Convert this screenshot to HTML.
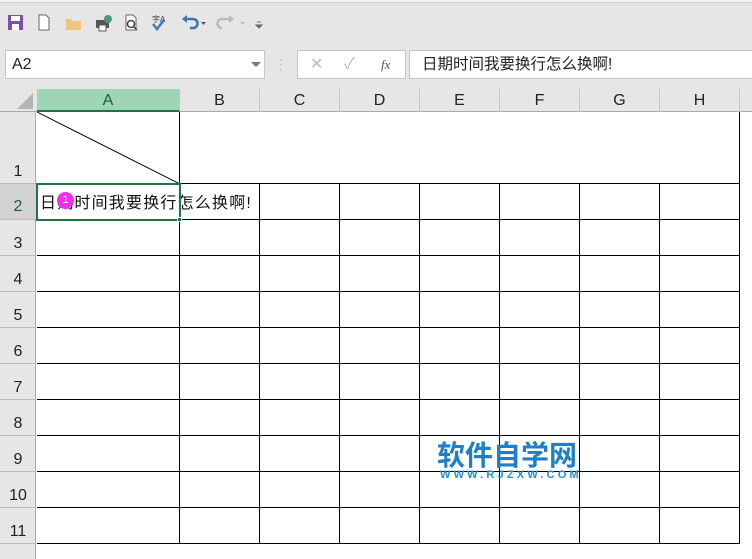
<!DOCTYPE html><html><head><meta charset="utf-8"><style>
*{margin:0;padding:0;box-sizing:border-box}
body{width:752px;height:559px;background:#e6e6e6;position:relative;overflow:hidden;font-family:"Liberation Sans","Noto Sans CJK SC",sans-serif}
.a{position:absolute}
.hl{position:absolute;height:1px;background:#000}
.vl{position:absolute;width:1px;background:#000}
.ch{position:absolute;top:89px;height:23px;font-size:16px;color:#222;text-align:center;line-height:23px;border-right:1px solid #c6c6c6}
.rh{position:absolute;left:0;width:36px;font-size:16px;color:#222;text-align:center}
</style></head><body>
<div class="a" style="left:0;top:0;width:752px;height:3px;background:#f5f5f5;border-bottom:1px solid #d0d0d0"></div>
<svg class="a" style="left:0;top:8px" width="280" height="28">
<rect x="8" y="7" width="15" height="15" fill="#7f4fa8"/><rect x="11" y="8" width="9" height="5" fill="#fff"/><rect x="12" y="16" width="7" height="6" fill="#fff"/>
<path d="M39 7h7l3 3v12h-10z" fill="#fff" stroke="#666"/>
<path d="M66 11h5l1 2h9v9h-15z" fill="#edc580"/>
<rect x="96" y="12" width="13" height="8" fill="#555"/><rect x="99" y="17" width="7" height="6" fill="#fff" stroke="#555"/><circle cx="108" cy="11" r="4" fill="#4c9a7a"/>
<path d="M126 7h7l3 3v12h-10z" fill="#fff" stroke="#666"/><circle cx="131" cy="16" r="3.5" fill="none" stroke="#444" stroke-width="1.5"/><path d="M133 18l4 4" stroke="#444" stroke-width="1.5"/>
<text x="152" y="14" font-size="8" fill="#444">字A</text><path d="M153 16l4 5 7-9" stroke="#3b7dc4" stroke-width="2.5" fill="none"/>
<path d="M185 11h8a4 4 0 010 9h-3" stroke="#3b75b8" stroke-width="2.5" fill="none"/><path d="M182 11l5-4v8z" fill="#3b75b8"/><path d="M201 14h5l-2.5 3z" fill="#555"/>
<path d="M230 11h-8a4 4 0 000 9" stroke="#bbb" stroke-width="2.5" fill="none"/><path d="M234 11l-5-4v8z" fill="#bbb"/><path d="M240 14h5l-2.5 3z" fill="#bbb"/>
<path d="M257 14h4M256 17h6l-3 3z" stroke="#666" fill="#666"/>
</svg>
<div class="a" style="left:5px;top:50px;width:260px;height:29px;background:#fff;border:1px solid #c6c6c6;font-size:16px;line-height:27px;padding-left:6px;color:#222">A2</div>
<div class="a" style="left:251px;top:62px;width:0;height:0;border-left:5px solid transparent;border-right:5px solid transparent;border-top:5px solid #777"></div>
<div class="a" style="left:279px;top:57px;color:#aaa;font-size:12px;line-height:5px">·<br>·<br>·</div>
<div class="a" style="left:297px;top:50px;width:109px;height:29px;background:#fff;border:1px solid #c6c6c6;font-size:16px;line-height:27px;color:#bbb"><span class="a" style="left:12px">✕</span><span class="a" style="left:46px">✓</span><span class="a" style="left:83px;font-family:'Liberation Serif';font-style:italic;color:#555;font-size:13px">fx</span></div>
<div class="a" style="left:409px;top:50px;width:345px;height:29px;background:#fff;border:1px solid #c6c6c6;font-size:15.5px;line-height:27px;padding-left:12px;color:#222">日期时间我要换行怎么换啊!</div>
<div class="a" style="left:0;top:112px;width:752px;height:447px;background:#fff"></div>
<div class="a" style="left:0;top:112px;width:36px;height:447px;background:#e6e6e6;border-right:1px solid #aaa"></div>
<div class="a" style="left:0;top:111px;width:752px;height:1px;background:#aaa"></div>
<div class="a" style="left:17px;top:93px;width:0;height:0;border-left:16px solid transparent;border-bottom:16px solid #b4b4b4"></div>
<div class="ch" style="left:37px;width:143px;background:#9fd5b7;color:#1f5a3a;border-bottom:2px solid #217346">A</div>
<div class="ch" style="left:180px;width:80px">B</div><div class="ch" style="left:260px;width:80px">C</div><div class="ch" style="left:340px;width:80px">D</div><div class="ch" style="left:420px;width:80px">E</div><div class="ch" style="left:500px;width:80px">F</div><div class="ch" style="left:580px;width:80px">G</div><div class="ch" style="left:660px;width:80px">H</div>
<div class="rh" style="top:163px">1</div>
<div class="rh" style="top:184px;height:36px;line-height:46px;background:#d2d2d2;color:#1f5a3a">2</div>
<div class="rh" style="top:235px">3</div><div class="rh" style="top:271px">4</div><div class="rh" style="top:307px">5</div><div class="rh" style="top:343px">6</div><div class="rh" style="top:379px">7</div><div class="rh" style="top:415px">8</div><div class="rh" style="top:451px">9</div><div class="rh" style="top:487px">10</div><div class="rh" style="top:523px">11</div>
<div class="a" style="left:0;top:183px;width:36px;height:1px;background:#bbb"></div>
<div class="a" style="left:0;top:219px;width:36px;height:1px;background:#bbb"></div>
<div class="a" style="left:0;top:255px;width:36px;height:1px;background:#bbb"></div>
<div class="a" style="left:0;top:291px;width:36px;height:1px;background:#bbb"></div>
<div class="a" style="left:0;top:327px;width:36px;height:1px;background:#bbb"></div>
<div class="a" style="left:0;top:363px;width:36px;height:1px;background:#bbb"></div>
<div class="a" style="left:0;top:399px;width:36px;height:1px;background:#bbb"></div>
<div class="a" style="left:0;top:435px;width:36px;height:1px;background:#bbb"></div>
<div class="a" style="left:0;top:471px;width:36px;height:1px;background:#bbb"></div>
<div class="a" style="left:0;top:507px;width:36px;height:1px;background:#bbb"></div>
<div class="a" style="left:0;top:543px;width:36px;height:1px;background:#bbb"></div>
<div class="hl" style="left:37px;top:183px;width:703px"></div>
<div class="hl" style="left:37px;top:219px;width:703px"></div><div class="hl" style="left:37px;top:255px;width:703px"></div><div class="hl" style="left:37px;top:291px;width:703px"></div><div class="hl" style="left:37px;top:327px;width:703px"></div><div class="hl" style="left:37px;top:363px;width:703px"></div><div class="hl" style="left:37px;top:399px;width:703px"></div><div class="hl" style="left:37px;top:435px;width:703px"></div><div class="hl" style="left:37px;top:471px;width:703px"></div><div class="hl" style="left:37px;top:507px;width:703px"></div><div class="hl" style="left:37px;top:543px;width:703px"></div>
<div class="vl" style="left:179px;top:112px;height:432px"></div>
<div class="vl" style="left:739px;top:112px;height:432px"></div>
<div class="vl" style="left:259px;top:184px;height:360px"></div><div class="vl" style="left:339px;top:184px;height:360px"></div><div class="vl" style="left:419px;top:184px;height:360px"></div><div class="vl" style="left:499px;top:184px;height:360px"></div><div class="vl" style="left:579px;top:184px;height:360px"></div><div class="vl" style="left:659px;top:184px;height:360px"></div>
<svg class="a" style="left:37px;top:112px" width="143" height="72"><line x1="0" y1="0" x2="143" y2="72" stroke="#000" stroke-width="1"/></svg>
<div class="a" style="left:40px;top:189px;font-size:16px;letter-spacing:1.2px;color:#111;white-space:nowrap">日期时间我要换行怎么换啊!</div>
<div class="a" style="left:36px;top:183px;width:145px;height:38px;border:2px solid #217346"></div>
<div class="a" style="left:177px;top:217px;width:5px;height:5px;background:#217346;border:1px solid #fff"></div>
<div class="a" style="left:57px;top:192px;width:17px;height:17px;border-radius:50%;background:#f02ef0;color:#fff;font-size:11px;text-align:center;line-height:17px">1</div>
<div class="a" style="left:437px;top:437px;font-size:28px;font-weight:bold;color:#1e7fc8;font-family:'Noto Sans CJK SC',sans-serif;line-height:34px">软件自学网</div>
<div class="a" style="left:440px;top:469px;font-size:11px;font-weight:bold;color:#1e90d8;letter-spacing:3.2px;white-space:nowrap">WWW.RJZXW.COM</div>
</body></html>
